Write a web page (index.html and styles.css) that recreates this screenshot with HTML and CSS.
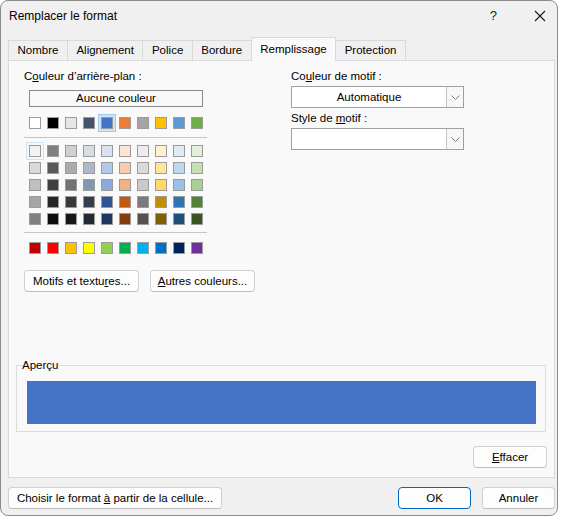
FILE: index.html
```html
<!DOCTYPE html>
<html lang="fr">
<head>
    <meta charset="UTF-8">
    <title>Remplacer le format</title>
    <link rel="stylesheet" href="styles.css">
</head>
<body>
    <div class="dialog">
        <div class="titlebar">
            <span class="title">Remplacer le format</span>
            <span class="help">?</span>
            <svg class="close" width="12" height="12" viewBox="0 0 12 12">
                <path d="M1 1 L11 11 M11 1 L1 11" stroke="#1a1a1a" stroke-width="1.1" fill="none"/>
            </svg>
        </div>

        <div class="tabs">
            <div class="tab">Nombre</div>
            <div class="tab">Alignement</div>
            <div class="tab">Police</div>
            <div class="tab">Bordure</div>
            <div class="tab selected">Remplissage</div>
            <div class="tab">Protection</div>
        </div>

        <div class="panel">
            <div class="columns">
                <div class="bg-col">
                    <div class="label">C<u>o</u>uleur d’arrière-plan :</div>
                    <div class="no-color">Aucune couleur</div>
                    <div class="swatch-row" id="themeRow"></div>
                    <div class="sep"></div>
                    <div class="swatch-grid" id="tintGrid"></div>
                    <div class="sep"></div>
                    <div class="swatch-row standard" id="standardRow"></div>
                </div>
                <div class="pattern-col">
                    <div class="label">Co<u>u</u>leur de motif :</div>
                    <div class="combo">
                        <span class="combo-value">Automatique</span>
                        <span class="combo-arrow">
                            <svg width="9" height="5" viewBox="0 0 9 5"><path d="M0.5 0.5 L4.5 4.5 L8.5 0.5" stroke="#7a7a7a" fill="none"/></svg>
                        </span>
                    </div>
                    <div class="label second">Style de <u>m</u>otif :</div>
                    <div class="combo">
                        <span class="combo-value"></span>
                        <span class="combo-arrow">
                            <svg width="9" height="5" viewBox="0 0 9 5"><path d="M0.5 0.5 L4.5 4.5 L8.5 0.5" stroke="#7a7a7a" fill="none"/></svg>
                        </span>
                    </div>
                </div>
            </div>

            <div class="extra-buttons">
                <button class="btn motifs">Motifs et textu<u>r</u>es...</button>
                <button class="btn others"><u>A</u>utres couleurs...</button>
            </div>

            <fieldset class="preview">
                <legend>Aperçu</legend>
                <div class="preview-fill"></div>
            </fieldset>

            <div class="clear-row">
                <button class="btn clear"><u>E</u>ffacer</button>
            </div>
        </div>

        <div class="footer">
            <button class="btn pick">Choisir le format <u>à</u> partir de la cellule...</button>
            <div class="footer-right">
                <button class="btn ok default">OK</button>
                <button class="btn cancel">Annuler</button>
            </div>
        </div>
    </div>

    <script>
        const theme = ["#ffffff", "#000000", "#e7e6e6", "#44546a", "#4472c4", "#ed7d31", "#a5a5a5", "#ffc000", "#5b9bd5", "#70ad47"];
        const tints = [
            ["#f2f2f2", "#7f7f7f", "#d0cece", "#d6dce4", "#d9e1f2", "#fce4d6", "#ededed", "#fff2cc", "#ddebf7", "#e2efda"],
            ["#d9d9d9", "#595959", "#aeaaaa", "#adb9ca", "#b4c6e7", "#f8cbad", "#dbdbdb", "#ffe699", "#bdd7ee", "#c6e0b4"],
            ["#bfbfbf", "#404040", "#757171", "#8497b0", "#8ea9db", "#f4b084", "#c9c9c9", "#ffd966", "#9bc2e6", "#a9d08e"],
            ["#a6a6a6", "#262626", "#3a3838", "#333f4f", "#305496", "#c65911", "#7b7b7b", "#bf8f00", "#2f75b5", "#548235"],
            ["#808080", "#0d0d0d", "#171616", "#222a35", "#203764", "#833c0c", "#525252", "#806000", "#1f4e78", "#375623"]
        ];
        const standard = ["#c00000", "#ff0000", "#ffc000", "#ffff00", "#92d050", "#00b050", "#00b0f0", "#0070c0", "#002060", "#7030a0"];

        function makeSwatch(color) {
            const s = document.createElement("span");
            s.className = "swatch";
            s.style.background = color;
            return s;
        }

        const themeRow = document.getElementById("themeRow");
        theme.forEach((c, i) => {
            const s = makeSwatch(c);
            if (i === 4) s.classList.add("selected");
            themeRow.appendChild(s);
        });

        const tintGrid = document.getElementById("tintGrid");
        tints.forEach((row, r) => {
            row.forEach((c, i) => {
                const s = makeSwatch(c);
                if (r === 0 && i === 0) s.classList.add("focused");
                tintGrid.appendChild(s);
            });
        });

        const standardRow = document.getElementById("standardRow");
        standard.forEach(c => standardRow.appendChild(makeSwatch(c)));
    </script>
</body>
</html>
```

FILE: styles.css
```css
body {
    margin: 0;
    background-color: #ffffff;
    font-family: "Liberation Sans", Arial, sans-serif;
    font-size: 11.5px;
    color: #000;
}
.dialog {
    box-sizing: border-box;
    width: 558px;
    height: 516px;
    background-color: #f0f0f0;
    border: 1px solid #8c8c8c;
    border-radius: 8px;
    display: flex;
    flex-direction: column;
}
.titlebar {
    height: 29px;
    display: flex;
    align-items: center;
    padding-left: 8px;
    font-size: 12px;
}
.title {
    flex: 1;
}
.help {
    font-size: 13px;
    margin-right: 37px;
    color: #1a1a1a;
}
.close {
    margin-right: 11px;
}
.tabs {
    display: flex;
    align-items: flex-end;
    height: 23px;
    margin-top: 7px;
    padding-left: 7px;
}
.tab {
    height: 20px;
    line-height: 19px;
    box-sizing: border-box;
    padding: 0 8.5px;
    border: 1px solid #d9d9d9;
    border-bottom: none;
    margin-right: -1px;
    background-color: #f0f0f0;
}
.tab.selected {
    height: 24px;
    line-height: 23px;
    margin-bottom: -1px;
    background-color: #f9f9f9;
    position: relative;
    z-index: 1;
}
.panel {
    box-sizing: border-box;
    height: 418px;
    margin: 0 2px 0 7px;
    background-color: #f9f9f9;
    border: 1px solid #d9d9d9;
    padding: 7px 8px 0 7px;
}
.columns {
    display: flex;
}
.bg-col {
    width: 183px;
    margin-left: 8px;
}
.pattern-col {
    width: 173px;
    margin-left: 84px;
}
.label {
    height: 16px;
    line-height: 16px;
}
.label.second {
    margin-top: 2px;
}
.no-color {
    box-sizing: border-box;
    width: 174px;
    height: 17px;
    line-height: 15px;
    margin: 6px 0 0 5px;
    border: 1px solid #8a8a8a;
    text-align: center;
}
.swatch-row {
    display: flex;
    gap: 6px;
    margin: 10px 0 0 5px;
    height: 12px;
}
.swatch-row.standard {
    margin-top: 9px;
}
.swatch-grid {
    display: grid;
    grid-template-columns: repeat(10, 12px);
    grid-auto-rows: 12px;
    column-gap: 6px;
    row-gap: 5px;
    margin: 7px 0 0 5px;
}
.swatch {
    box-sizing: border-box;
    width: 12px;
    height: 12px;
    border: 1px solid #9b9b9b;
}
.swatch.selected {
    box-shadow: 0 0 0 2px #cde4f8, 0 0 0 3px #9fc8ec;
}
.swatch.focused {
    box-shadow: 0 0 0 2px #f4f9fe, 0 0 0 3px #cce4f7;
}
.sep {
    height: 1px;
    background-color: #c6c6c6;
    margin-top: 8px;
}
.swatch-grid + .sep {
    margin-top: 7px;
}
.combo {
    box-sizing: border-box;
    display: flex;
    height: 22px;
    margin-top: 2px;
    border: 1px solid #a0a0a0;
    background-color: #ffffff;
}
.combo-value {
    flex: 1;
    text-align: center;
    line-height: 20px;
}
.combo-arrow {
    width: 16px;
    border-left: 1px solid #c8c8c8;
    background-color: #f7f7f7;
    display: flex;
    align-items: center;
    justify-content: center;
}
.btn {
    box-sizing: border-box;
    font-family: inherit;
    font-size: 11.5px;
    color: #000;
    height: 22px;
    padding: 0;
    background-color: #fdfdfd;
    border: 1px solid #d0d0d0;
    border-bottom-color: #bdbdbd;
    border-radius: 4px;
}
.extra-buttons {
    display: flex;
    gap: 11px;
    margin: 16px 0 0 8px;
}
.motifs {
    width: 115px;
}
.others {
    width: 105px;
}
.preview {
    box-sizing: border-box;
    width: 530px;
    margin: 66px 0 0 0;
    padding: 9px 9px 7px 10px;
    border: 1px solid #dcdcdc;
}
.preview legend {
    padding: 0;
    margin-left: -5px;
    line-height: 14px;
}
.preview-fill {
    height: 43px;
    background-color: #4472c4;
}
.clear-row {
    display: flex;
    justify-content: flex-end;
    margin: 14px -1px 0 0;
}
.clear {
    width: 74px;
}
.footer {
    display: flex;
    justify-content: space-between;
    margin: 9px 2px 0 7px;
}
.footer-right {
    display: flex;
    gap: 11px;
}
.pick {
    width: 214px;
}
.ok, .cancel {
    width: 73px;
}
.default {
    border: 1px solid #0067c0;
    border-bottom-color: #0067c0;
}
```
